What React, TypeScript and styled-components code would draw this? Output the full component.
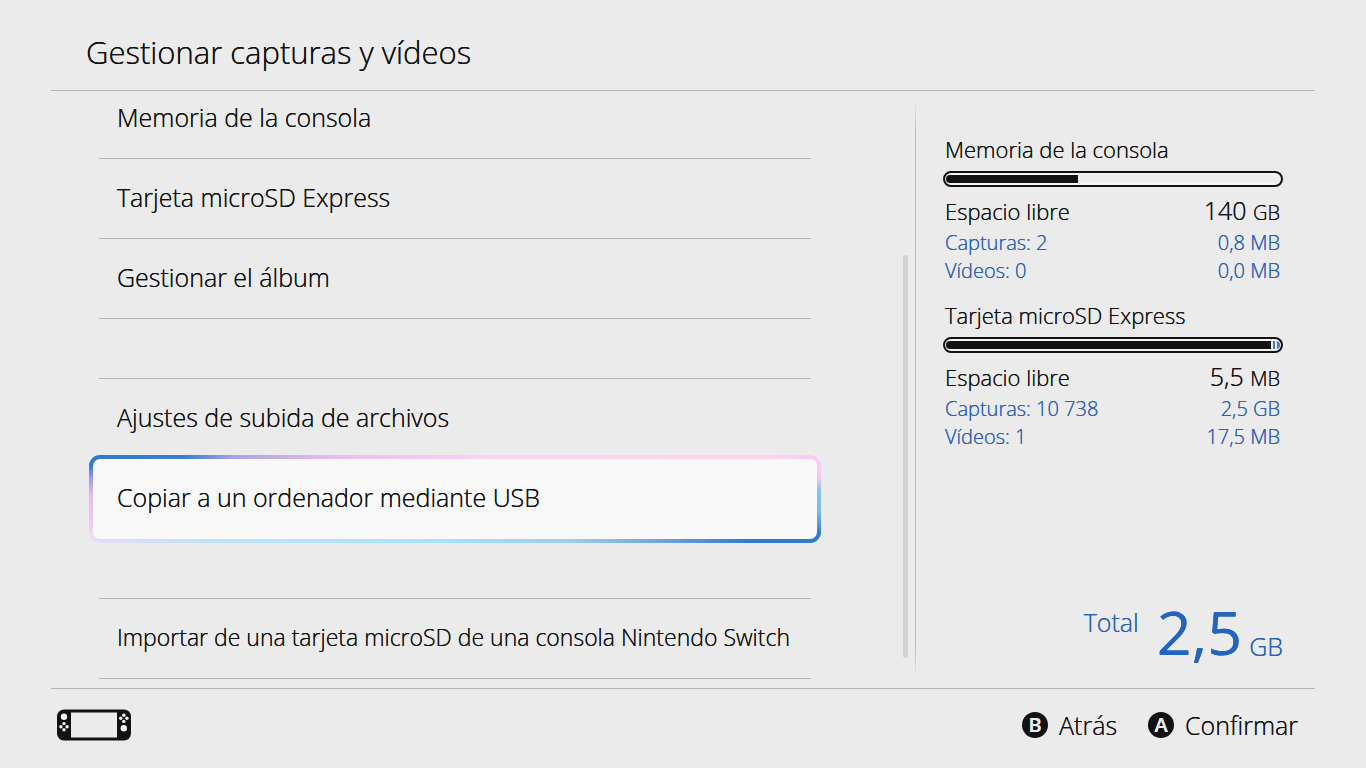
import React from "react";
import styled, { createGlobalStyle, css } from "styled-components";

const INK = "#111213";
const BLUE = "#2a62b8";
const LINE = "#b4b4b4";

const GlobalStyle = createGlobalStyle`
  *, *::before, *::after { box-sizing: border-box; }
  body {
    margin: 0;
    background: #ebebeb;
    color: ${INK};
    font-family: "Open Sans", "Noto Sans", sans-serif;
    font-weight: 300;
    text-shadow: 0 0 0 currentColor;
  }
  button {
    font: inherit;
    color: inherit;
    text-shadow: inherit;
    border: 0;
    background: none;
    cursor: pointer;
  }
`;

const Screen = styled.div`
  display: flex;
  flex-direction: column;
  height: 100vh;
  min-height: 640px;
  padding: 0 51px;
`;

const Header = styled.header`
  display: flex;
  align-items: center;
  flex: none;
  height: 91px;
  padding: 14px 35px 0;
  border-bottom: 1px solid ${LINE};
`;

const Title = styled.h1`
  margin: 0;
  font-size: 31px;
  line-height: 40px;
  font-weight: inherit;
`;

const Body = styled.div`
  display: flex;
  flex: 1;
  min-height: 0;
`;

const ListPane = styled.main`
  display: flex;
  flex: 1;
  min-width: 0;
  overflow: hidden;
  padding: 0 7px 0 39px;
`;

const Menu = styled.ul`
  flex: 1;
  min-width: 0;
  margin: -12px 0 0;
  padding: 0 9px;
  list-style: none;
`;

const MenuItem = styled.li<{ $gap?: boolean; $open?: boolean }>`
  display: flex;
  align-items: flex-start;
  height: 80px;
  border-bottom: 1px solid ${(p) => (p.$open ? "transparent" : LINE)};
  ${(p) =>
    p.$gap &&
    css`
      height: 140px;
      padding-top: 60px;
      background: linear-gradient(${LINE}, ${LINE}) 0 59px / 100% 1px no-repeat;
    `}
`;

const MenuButton = styled.button<{ $small?: boolean; $selected?: boolean }>`
  flex: 1;
  height: 79px;
  padding: 0 18px 4px;
  text-align: left;
  font-size: ${(p) => (p.$small ? 23 : 25)}px;
  line-height: 32px;
  white-space: nowrap;
  ${(p) =>
    p.$selected &&
    css`
      height: 88px;
      margin: -4px -10px;
      padding: 0 24px 4px;
      border: 4px solid transparent;
      border-radius: 11px;
      background:
        linear-gradient(#f8f8f8, #f8f8f8) padding-box,
        linear-gradient(90deg, #2f78d0 0%, #3a7dd2 13%, #a9a4e4 20%, #eabdf0 34%, #fbd3ee 55%, #fdd4ea 90%, #f8cdf2 100%)
          0 0 / 100% 11px no-repeat border-box,
        linear-gradient(90deg, #e9dcf8 0%, #d9dcfa 6%, #bfe2fa 18%, #a9e4fa 45%, #9ccdee 66%, #6fa3dc 78%, #2f7ccf 90%, #2f7ccf 100%)
          0 100% / 100% 11px no-repeat border-box,
        linear-gradient(180deg, #2f78d0 12%, #9d9ae2 26%, #e3b8ee 45%, #f5c9f2 80%, #e9dcf8 100%)
          0 0 / 50% 100% no-repeat border-box,
        linear-gradient(180deg, #f8cdf2 14%, #f0c8f2 26%, #86c4ec 40%, #7fbcea 64%, #2f7ccf 90%)
          100% 0 / 50% 100% no-repeat border-box;
    `}
`;

const ScrollTrack = styled.div`
  flex: none;
  width: 5px;
  margin: 0 0 30px 83px;
  padding-top: 164px;
`;

const ScrollThumb = styled.div`
  height: 100%;
  border-radius: 3px;
  background: #d2d2d2;
`;

const Divider = styled.div`
  flex: none;
  width: 1px;
  margin: 10px 0;
  background: linear-gradient(transparent, #bcbcbc 30px, #bcbcbc calc(100% - 30px), transparent);
`;

const Storage = styled.aside`
  display: flex;
  flex-direction: column;
  flex: none;
  width: 399px;
  padding: 42px 32px 24px 27px;
`;

const Drive = styled.section`
  margin-bottom: 14px;
`;

const DriveName = styled.h2`
  margin: 0 0 5px;
  padding-left: 2px;
  font-size: 22px;
  line-height: 33px;
  font-weight: inherit;
`;

const Meter = styled.div`
  display: flex;
  height: 16px;
  padding: 2px 1px;
  border: 2px solid ${INK};
  border-radius: 8px;
  background: #f3f3f3;
`;

const MeterInner = styled.div`
  display: flex;
  flex: 1;
  gap: 2px;
  overflow: hidden;
  border-radius: 5px;
  background: #ededed;
`;

const Used = styled.div`
  background: ${INK};
`;

const Slice = styled.div`
  flex: 1;
  background: #4a7cc4;
`;

const Facts = styled.dl`
  margin: 6px 0 0;
  padding: 0 3px 0 2px;
`;

const Fact = styled.div<{ $main?: boolean }>`
  display: flex;
  align-items: baseline;
  justify-content: space-between;
  height: ${(p) => (p.$main ? 36 : 28)}px;
  color: ${(p) => (p.$main ? INK : BLUE)};
  font-size: ${(p) => (p.$main ? 22 : 20)}px;
  line-height: ${(p) => (p.$main ? 34 : 28)}px;
`;

const Value = styled.dd<{ $main?: boolean }>`
  margin: 0;
  font-size: ${(p) => (p.$main ? 25 : 20)}px;
`;

const Unit = styled.span`
  font-size: 20px;
`;

const Total = styled.p`
  display: flex;
  align-items: flex-start;
  justify-content: flex-end;
  margin: auto 0 0;
  color: ${BLUE};
  font-size: 25px;
  line-height: 32px;
`;

const TotalLabel = styled.span`
  padding-top: 6px;
`;

const TotalValue = styled.strong`
  margin: 0 7px 0 18px;
  color: #2364c0;
  font-size: 61px;
  line-height: 64px;
  font-weight: 400;
`;

const TotalUnit = styled.span`
  align-self: flex-end;
  padding-bottom: 2px;
`;

const Footer = styled.footer`
  display: flex;
  align-items: center;
  justify-content: space-between;
  flex: none;
  height: 80px;
  padding: 0 17px 7px 5px;
  border-top: 1px solid ${LINE};
`;

const Hints = styled.div`
  display: flex;
  gap: 31px;
`;

const Hint = styled.button`
  display: flex;
  align-items: center;
  gap: 11px;
  padding: 0;
  font-size: 25px;
  line-height: 32px;
`;

const Key = styled.span`
  width: 26px;
  height: 26px;
  border-radius: 50%;
  background: ${INK};
  color: #ebebeb;
  font-size: 20px;
  line-height: 26px;
  font-weight: 600;
  text-align: center;
`;

type Entry = { label: string; gap?: boolean; open?: boolean; small?: boolean; selected?: boolean };

const entries: Entry[] = [
  { label: "Memoria de la consola" },
  { label: "Tarjeta microSD Express" },
  { label: "Gestionar el álbum" },
  { label: "Ajustes de subida de archivos", gap: true, open: true },
  { label: "Copiar a un ordenador mediante USB", selected: true, open: true },
  { label: "Importar de una tarjeta microSD de una consola Nintendo Switch", gap: true, small: true },
];

const drives = [
  {
    name: "Memoria de la consola",
    used: 39.5,
    slices: 0,
    free: ["140", "GB"],
    media: [["Capturas: 2", "0,8 MB"], ["Vídeos: 0", "0,0 MB"]],
  },
  {
    name: "Tarjeta microSD Express",
    used: 97.3,
    slices: 2,
    free: ["5,5", "MB"],
    media: [["Capturas: 10 738", "2,5 GB"], ["Vídeos: 1", "17,5 MB"]],
  },
];

function ConsoleIcon() {
  return (
    <svg width="76" height="32" viewBox="0 0 76 32" role="img" aria-label="Consola">
      <rect x="1" y="0.5" width="74" height="31" rx="7" fill={INK} />
      <rect x="15" y="3.5" width="46" height="25" fill="#ebebeb" />
      <g fill="#f2f2f2">
        <circle cx="8" cy="7.8" r="3.2" />
        <circle cx="8" cy="14.6" r="1.7" />
        <circle cx="8" cy="20.8" r="1.7" />
        <circle cx="4.9" cy="17.7" r="1.7" />
        <circle cx="11.1" cy="17.7" r="1.7" />
        <circle cx="67.8" cy="6.2" r="1.7" />
        <circle cx="67.8" cy="12.4" r="1.7" />
        <circle cx="64.7" cy="9.3" r="1.7" />
        <circle cx="70.9" cy="9.3" r="1.7" />
        <circle cx="67.8" cy="19.2" r="3.2" />
      </g>
    </svg>
  );
}

export default function App() {
  return (
    <>
      <GlobalStyle />
      <Screen>
        <Header>
          <Title>Gestionar capturas y vídeos</Title>
        </Header>
        <Body>
          <ListPane>
            <Menu>
              {entries.map((e) => (
                <MenuItem key={e.label} $gap={e.gap} $open={e.open}>
                  <MenuButton type="button" $small={e.small} $selected={e.selected}>
                    {e.label}
                  </MenuButton>
                </MenuItem>
              ))}
            </Menu>
            <ScrollTrack>
              <ScrollThumb />
            </ScrollTrack>
          </ListPane>
          <Divider />
          <Storage>
            {drives.map((d) => (
              <Drive key={d.name}>
                <DriveName>{d.name}</DriveName>
                <Meter role="meter" aria-label={d.name} aria-valuemin={0} aria-valuemax={100} aria-valuenow={d.used}>
                  <MeterInner>
                    <Used style={{ width: `${d.used}%` }} />
                    {Array.from({ length: d.slices }, (_, i) => (
                      <Slice key={i} />
                    ))}
                  </MeterInner>
                </Meter>
                <Facts>
                  <Fact $main>
                    <dt>Espacio libre</dt>
                    <Value $main>
                      {d.free[0]} <Unit>{d.free[1]}</Unit>
                    </Value>
                  </Fact>
                  {d.media.map(([label, size]) => (
                    <Fact key={label}>
                      <dt>{label}</dt>
                      <Value>{size}</Value>
                    </Fact>
                  ))}
                </Facts>
              </Drive>
            ))}
            <Total>
              <TotalLabel>Total</TotalLabel>
              <TotalValue>2,5</TotalValue>
              <TotalUnit>GB</TotalUnit>
            </Total>
          </Storage>
        </Body>
        <Footer>
          <ConsoleIcon />
          <Hints>
            <Hint type="button">
              <Key>B</Key>Atrás
            </Hint>
            <Hint type="button">
              <Key>A</Key>Confirmar
            </Hint>
          </Hints>
        </Footer>
      </Screen>
    </>
  );
}
